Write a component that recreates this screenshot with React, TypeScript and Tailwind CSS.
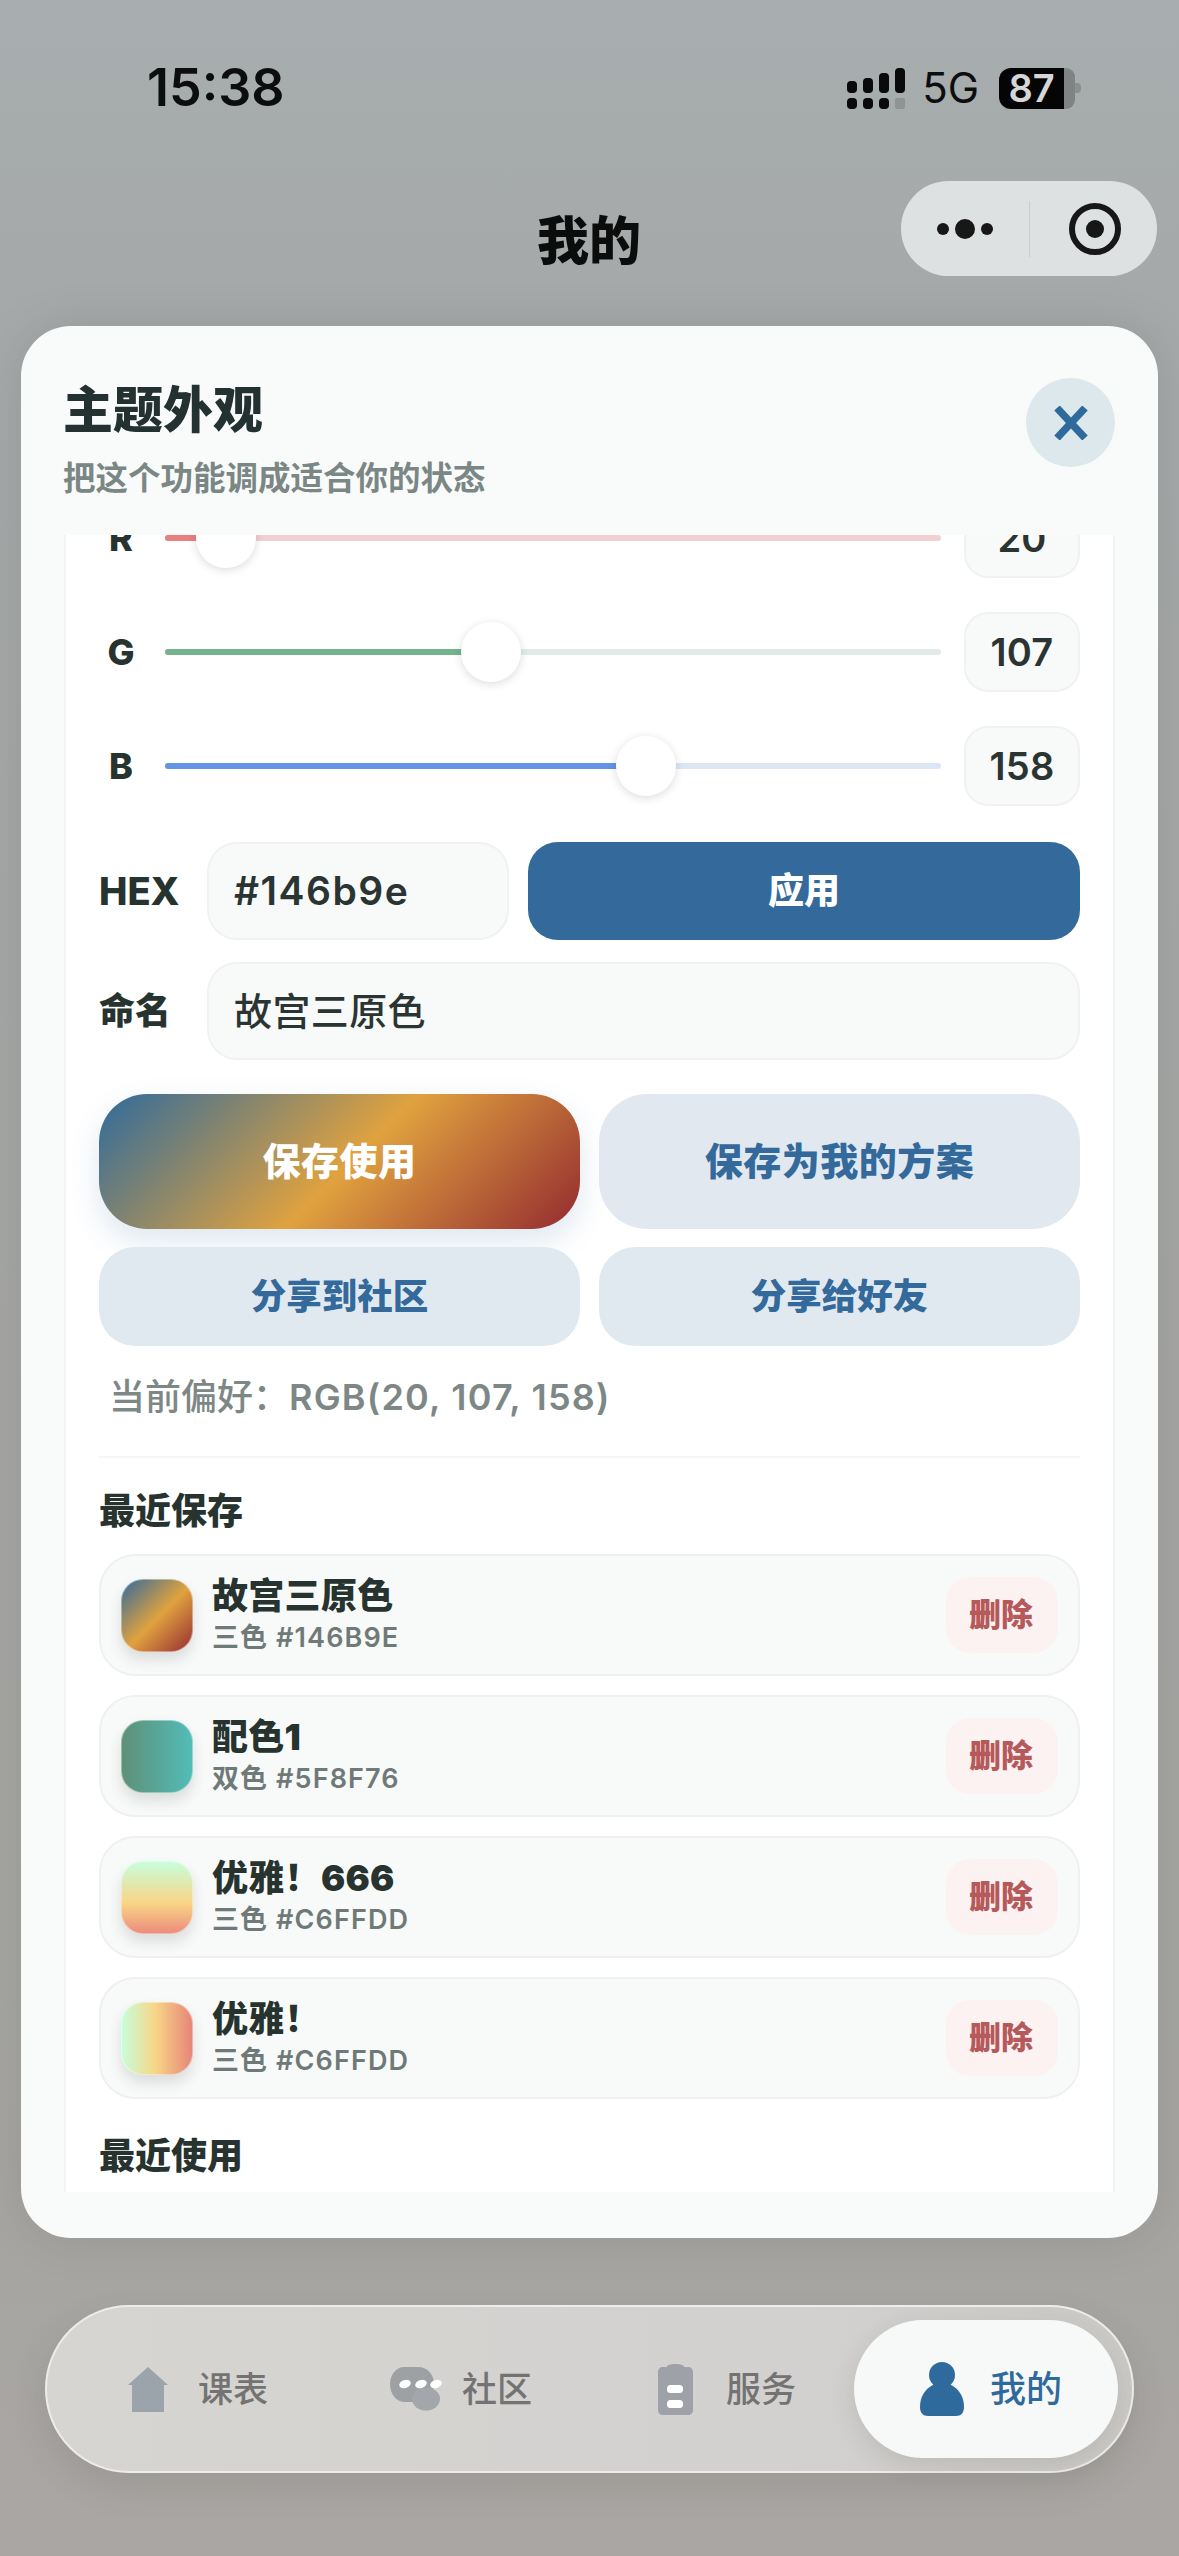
import type { ReactNode } from 'react';

const threeColor = 'bg-[linear-gradient(135deg,#2f6a9c,#e0a23f_52%,#9a3431_96%)]';

const saved = [
  { name: '故宫三原色', sub: '三色 #146B9E', swatch: threeColor },
  { name: '配色1', sub: '双色 #5F8F76', swatch: 'bg-[linear-gradient(90deg,#5f8f76,#52bdb8)]' },
  { name: '优雅！666', sub: '三色 #C6FFDD', swatch: 'bg-[linear-gradient(180deg,#c6ffdd,#f8d586_58%,#ec8a7c)]' },
  { name: '优雅！', sub: '三色 #C6FFDD', swatch: 'bg-[linear-gradient(90deg,#c6ffdd,#f8d586_48%,#e68378)]' },
];

function ColorSlider({ label, value, fill, rest }: { label: string; value: number; fill: string; rest: string }) {
  const width = (value / 255) * 776;
  return (
    <div className="flex h-[80px] items-center">
      <span className="w-[44px] text-center text-[36px] font-extrabold text-[#27332f]">{label}</span>
      <div className={`relative ml-[22px] h-[6px] w-[776px] rounded-full ${rest}`}>
        <div className={`h-full rounded-full ${fill}`} style={{ width }} />
        <div
          className="absolute top-[-27px] h-[60px] w-[60px] -translate-x-1/2 rounded-full bg-white shadow-[0_2px_10px_rgba(0,0,0,0.14)]"
          style={{ left: width }}
        />
      </div>
      <div className="ml-[23px] flex h-[80px] w-[116px] items-center justify-center rounded-[24px] border-2 border-[#f0f2f2] bg-[#f8f9f9] text-[38px] font-semibold tracking-[0.2px] text-[#2a3533]">
        {value}
      </div>
    </div>
  );
}

function SavedRow({ name, sub, swatch }: { name: string; sub: string; swatch: string }) {
  return (
    <div className="flex h-[122px] items-center rounded-[36px] border-2 border-[#eef1f0] bg-[#f8faf9] pl-[20px] pr-[20px]">
      <div className={`h-[73px] w-[72px] rounded-[22px] border border-white/40 bg-origin-border shadow-[0_8px_14px_rgba(40,50,50,0.14)] ${swatch}`} />
      <div className="ml-[19px] pt-[4px]">
        <div className="text-[36px] leading-[42px] font-black tracking-[0.3px] text-[#27332f]">{name}</div>
        <div className="text-[27px] leading-[42px] font-semibold tracking-[1.1px] text-[#6f7a78]">{sub}</div>
      </div>
      <div className="ml-auto flex h-[76px] w-[112px] items-center justify-center rounded-[24px] bg-[#fdf2f2] pr-[2px] text-[32px] font-black text-[#b5595a]">
        删除
      </div>
    </div>
  );
}

function Tab({ icon, label, width }: { icon: ReactNode; label: string; width: string }) {
  return (
    <div className={`flex items-center ${width}`}>
      {icon}
      <span className="text-[35px] font-medium text-[#737373]">{label}</span>
    </div>
  );
}

export default function App() {
  return (
    <div className="flex h-[2556px] w-[1179px] flex-col overflow-hidden bg-[linear-gradient(180deg,#a8adaf_0%,#a5a9a9_11%,#a6a5a1_88%,#aaa6a4_100%)] font-['Inter','Noto_Sans_CJK_SC',sans-serif]">
      {/* Status bar */}
      <div className="flex h-[176px] items-center pl-[147px] pr-[98px]">
        <span className="text-[52px] font-semibold text-[#0c0d0d]">15:38</span>
        <svg className="ml-auto" width="58" height="41" viewBox="0 0 58 41" fill="#0a0a0a">
          <rect x="0" y="13" width="10" height="12" rx="4" />
          <rect x="16" y="10" width="10" height="15" rx="4" />
          <rect x="32" y="5" width="10" height="20" rx="4" />
          <rect x="48" y="0" width="10" height="25" rx="4" />
          <rect x="0" y="30" width="10" height="11" rx="4" />
          <rect x="16" y="30" width="10" height="11" rx="4" />
          <rect x="32" y="30" width="10" height="11" rx="4" />
          <rect x="48" y="30" width="10" height="11" rx="2" fill="#8f9394" />
        </svg>
        <span className="ml-[17px] text-[42px] leading-none text-[#0c0d0d]">5G</span>
        <div className="ml-[20px] flex h-[41px] items-center">
          <div className="flex h-[41px] w-[65px] items-center justify-center rounded-l-[12px] bg-[#050505] text-[38px] font-semibold text-[#d6d6d6]">
            87
          </div>
          <div className="h-[41px] w-[11px] rounded-r-[9px] bg-[#7f8384]" />
          <div className="h-[10px] w-[6px] rounded-r-[4px] bg-[#8b8f90]" />
        </div>
      </div>

      {/* Nav bar */}
      <div className="flex h-[150px] items-start">
        <span className="ml-[537px] mt-[32px] text-[52px] leading-[68px] font-black text-[#0b0d0c]">我的</span>
        <div className="ml-auto mr-[22px] mt-[5px] flex h-[95px] w-[256px] items-center rounded-full bg-[#dee1e2]">
          <svg className="ml-[36px]" width="64" height="20" viewBox="0 0 64 20" fill="#171717">
            <circle cx="6" cy="10" r="6" />
            <circle cx="28" cy="10" r="10" />
            <circle cx="50" cy="10" r="6" />
          </svg>
          <div className="ml-[28px] h-[56px] w-px bg-[#c9cdce]" />
          <svg className="ml-[39px]" width="52" height="52" viewBox="0 0 52 52">
            <circle cx="26" cy="26" r="23" fill="none" stroke="#171717" strokeWidth="6" />
            <circle cx="26" cy="26" r="9" fill="#171717" />
          </svg>
        </div>
      </div>

      {/* Theme sheet */}
      <div className="ml-[21px] flex h-[1912px] w-[1137px] flex-col rounded-[50px] bg-[#f9fbfa] shadow-[0_0_50px_rgba(0,0,0,0.1)]">
        <div className="flex h-[209px] items-start justify-between pl-[42px] pr-[43px]">
          <div>
            <div className="mt-[52px] text-[50px] leading-[64px] font-black text-[#233130]">主题外观</div>
            <div className="mt-[12px] text-[32.5px] leading-[50px] font-semibold text-[#7a8785]">把这个功能调成适合你的状态</div>
          </div>
          <div className="mt-[52px] flex h-[89px] w-[89px] items-center justify-center rounded-full bg-[#dde8ec]">
            <svg width="36" height="34" viewBox="0 0 36 34" fill="none" stroke="#2f6a9c" strokeWidth="7.5">
              <path d="M4 2 L32 32 M32 2 L4 32" />
            </svg>
          </div>
        </div>

        <div className="mx-[43px] h-[1657px] overflow-hidden border-x-2 border-[#f1f4f3] bg-white">
          <div className="mt-[-37px] px-[33px]">
            <div className="flex flex-col gap-[34px]">
              <ColorSlider label="R" value={20} fill="bg-[#e88080]" rest="bg-[#f0d0d0]" />
              <ColorSlider label="G" value={107} fill="bg-[#74b38e]" rest="bg-[#e1ebe8]" />
              <ColorSlider label="B" value={158} fill="bg-[#6394e6]" rest="bg-[#dce6f5]" />
            </div>

            <div className="mt-[36px] flex h-[98px] items-center">
              <span className="w-[108px] text-[38px] font-extrabold text-[#27332f]">HEX</span>
              <div className="flex h-full w-[302px] items-center rounded-[30px] border-2 border-[#f0f2f2] bg-[#f8f9f9] pl-[25px] text-[39px] font-semibold tracking-[1.5px] text-[#2a3533]">
                #146b9e
              </div>
              <div className="ml-[19px] flex h-full w-[552px] items-center justify-center rounded-[30px] bg-[#336a9b] text-[36px] font-black text-white">
                应用
              </div>
            </div>

            <div className="mt-[22px] flex h-[98px] items-center">
              <span className="w-[108px] text-[36px] font-black text-[#27332f]">命名</span>
              <div className="flex h-full w-[873px] items-center rounded-[30px] border-2 border-[#f0f2f2] bg-[#f8f9f9] pl-[25px] text-[38px] font-medium tracking-[0.4px] text-[#2a3533]">
                故宫三原色
              </div>
            </div>

            <div className="mt-[34px] grid w-[981px] grid-cols-[481px_481px] gap-x-[19px] gap-y-[18px]">
              <div className={`flex h-[135px] items-center justify-center rounded-[48px] text-[38px] font-black tracking-[0.5px] text-white shadow-[0_12px_30px_rgba(47,106,156,0.16)] ${threeColor}`}>
                保存使用
              </div>
              <div className="flex h-[135px] items-center justify-center rounded-[48px] bg-[#e1e8f0] text-[38px] font-black tracking-[0.5px] text-[#336a9b]">
                保存为我的方案
              </div>
              <div className="flex h-[99px] items-center justify-center rounded-[36px] bg-[#e1e9f0] text-[35.5px] font-black text-[#336a9b]">
                分享到社区
              </div>
              <div className="flex h-[99px] items-center justify-center rounded-[36px] bg-[#e1e9f0] text-[35.5px] font-black text-[#336a9b]">
                分享给好友
              </div>
            </div>

            <div className="mt-[26px] pl-[10px] text-[36px] leading-[50px] font-medium text-[#7d8886]">
              当前偏好：<span className="font-semibold tracking-[1.2px]">RGB(20, 107, 158)</span>
            </div>
            <div className="mt-[34px] h-[2px] w-[981px] bg-[#f5f7f6]" />

            <div className="mt-[28px] text-[36px] leading-[50px] font-black text-[#27332f]">最近保存</div>
            <div className="mt-[18px] flex w-[981px] flex-col gap-[19px]">
              {saved.map((item, i) => (
                <SavedRow key={i} {...item} />
              ))}
            </div>
            <div className="mt-[32px] text-[36px] leading-[50px] font-black text-[#27332f]">最近使用</div>
          </div>
        </div>
      </div>

      {/* Tab bar */}
      <div className="ml-[45px] mt-[67px] flex h-[168px] w-[1089px] items-center rounded-[84px] border-2 border-[#eeecea] bg-[linear-gradient(90deg,#d7d5d2,#d3d1cf_70%,#cbc9c6)] pl-[81px] shadow-[0_14px_36px_rgba(60,55,50,0.12)]">
        <Tab
          width="w-[262px]"
          label="课表"
          icon={
            <svg className="mr-[30px]" width="40" height="45" viewBox="0 0 40 45" fill="#9ba4aa">
              <path d="M20 0 L40 18 L36 18 L36 45 L4 45 L4 18 L0 18 Z" />
            </svg>
          }
        />
        <Tab
          width="w-[268px]"
          label="社区"
          icon={
            <svg className="mr-[20px]" width="52" height="44" viewBox="0 0 52 44">
              <path d="M14 0 H28 C38 0 44 8 44 17 C44 27 36 35 25 35 H15 C6 35 0 27 0 17 C0 8 6 0 14 0 Z" fill="#9da1a3" />
              <ellipse cx="36" cy="32" rx="14" ry="11.5" fill="#a3a6aa" />
              <ellipse cx="15" cy="17" rx="6" ry="4" fill="#fff" transform="rotate(-20 15 17)" />
              <ellipse cx="31" cy="17" rx="6" ry="4" fill="#fff" transform="rotate(-20 31 17)" />
              <ellipse cx="46" cy="17" rx="6" ry="4" fill="#fff" transform="rotate(-20 46 17)" />
            </svg>
          }
        />
        <Tab
          width="w-[196px]"
          label="服务"
          icon={
            <svg className="mr-[33px]" width="35" height="51" viewBox="0 0 35 51">
              <path d="M9 3 C9 1 12 0 17 0 C23 0 26 1 26 3 H30 C33 3 35 5 35 8 V46 C35 49 33 51 30 51 H5 C2 51 0 49 0 46 V8 C0 5 2 3 5 3 Z" fill="#9ea2a8" />
              <rect x="9" y="21" width="16" height="8" rx="3.5" fill="#fff" />
              <rect x="9" y="36" width="16" height="8" rx="3.5" fill="#fff" />
            </svg>
          }
        />
        <div className="flex h-[138px] w-[264px] items-center rounded-[69px] bg-[#f7f8f8] pl-[66px] shadow-[0_8px_24px_rgba(60,55,50,0.12)]">
          <svg className="mr-[26px]" width="44" height="54" viewBox="0 0 44 54" fill="#2f6a9c">
            <circle cx="22" cy="13" r="13" />
            <path d="M22 21 C34 21 44 31 44 45 C44 51 41 54 36 54 H8 C3 54 0 51 0 45 C0 31 10 21 22 21 Z" />
          </svg>
          <span className="text-[36px] font-medium text-[#2f6a9c]">我的</span>
        </div>
      </div>
    </div>
  );
}
